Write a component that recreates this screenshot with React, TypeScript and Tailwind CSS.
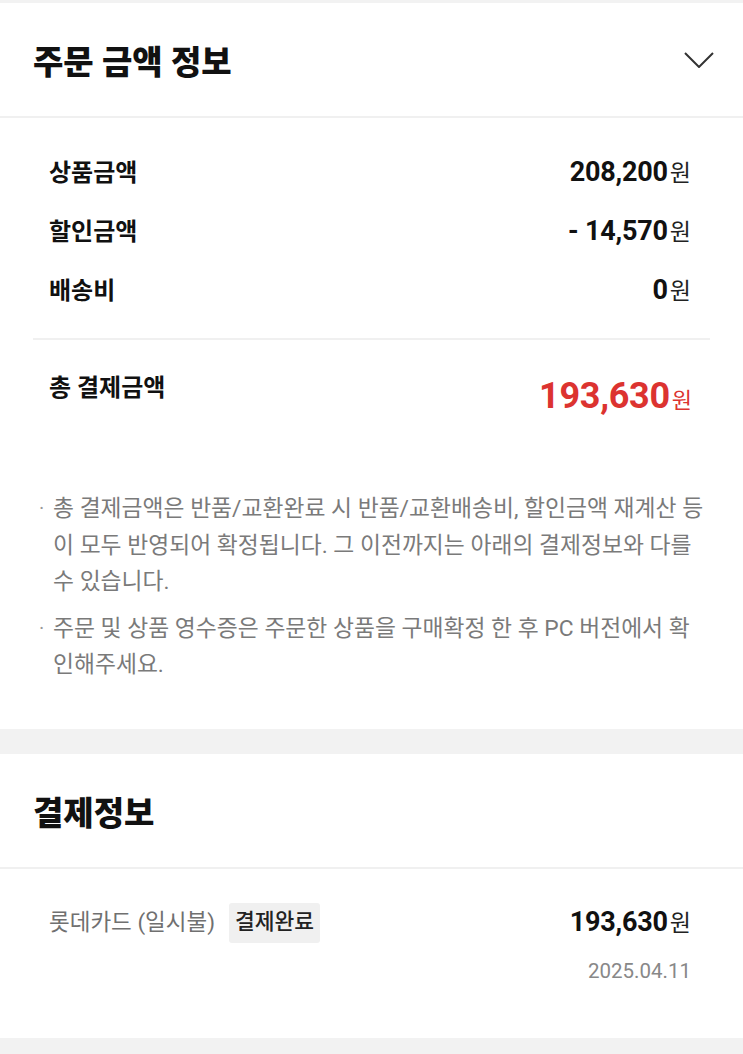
import React from "react";

const font = "font-['Roboto','Noto_Sans_CJK_KR',sans-serif]";

const Won = ({ className = "" }: { className?: string }) => (
  <span className={`ml-[2px] font-normal ${className}`}>원</span>
);

const AmountRow = ({ label, value }: { label: string; value: string }) => (
  <div className="flex h-[59px] items-center justify-between">
    <span className="text-[24px] font-bold text-[#111]">{label}</span>
    <span className="flex items-baseline">
      <span className="text-[27px] font-bold tracking-[-0.2px] text-[#111]">{value}</span>
      <Won className="text-[23px] text-[#222]" />
    </span>
  </div>
);

const Note = ({ lines }: { lines: string[] }) => (
  <div className="flex">
    <span className="w-[15px] shrink-0 pl-[1px] text-[20px] leading-[34px] text-[#999]">·</span>
    <div>
      {lines.map((line, i) => (
        <div key={i} className="whitespace-nowrap text-[22.8px] leading-[36.5px] text-[#7a7a7a]">
          {line}
        </div>
      ))}
    </div>
  </div>
);

export default function App() {
  return (
    <div className={`min-h-screen bg-[#f2f2f2] ${font}`}>
      <div className="h-[3px]" />

      {/* 주문 금액 정보 */}
      <section className="bg-white">
        <div className="flex h-[113px] items-center justify-between pl-[33px] pr-[29px]">
          <h2 className="mt-[7px] text-[33px] font-black text-[#111]">주문 금액 정보</h2>
          <svg width="30" height="16" viewBox="0 0 30 16" fill="none" className="mt-[1px]">
            <polyline points="1,1 15,15 29,1" stroke="#333" strokeWidth="2" />
          </svg>
        </div>
        <div className="h-[2px] bg-[#f0f0f0]" />

        <div className="pl-[49px] pr-[52px] pt-[25px]">
          <AmountRow label="상품금액" value="208,200" />
          <AmountRow label="할인금액" value="- 14,570" />
          <AmountRow label="배송비" value="0" />
        </div>

        <div className="mx-[33px] mt-[18px] h-[2px] bg-[#f0f0f0]" />

        <div className="flex items-start justify-between pl-[49px] pr-[51px] pt-[33px]">
          <span className="text-[24px] font-bold leading-[30px] text-[#111]">총 결제금액</span>
          <span className="mt-[1px] flex items-baseline leading-[44px] text-[#dc3330]">
            <span className="text-[36px] font-bold tracking-[-0.3px]">193,630</span>
            <Won className="text-[22px]" />
          </span>
        </div>

        <div className="flex flex-col gap-[10px] pb-[45px] pl-[38px] pr-[20px] pt-[68px]">
          <Note
            lines={[
              "총 결제금액은 반품/교환완료 시 반품/교환배송비, 할인금액 재계산 등",
              "이 모두 반영되어 확정됩니다. 그 이전까지는 아래의 결제정보와 다를",
              "수 있습니다.",
            ]}
          />
          <Note
            lines={[
              "주문 및 상품 영수증은 주문한 상품을 구매확정 한 후 PC 버전에서 확",
              "인해주세요.",
            ]}
          />
        </div>
      </section>

      <div className="h-[25px]" />

      {/* 결제정보 */}
      <section className="bg-white">
        <div className="flex h-[113px] items-center pl-[33px]">
          <h2 className="mt-[7px] text-[33px] font-black text-[#111]">결제정보</h2>
        </div>
        <div className="h-[2px] bg-[#f0f0f0]" />

        <div className="pb-[55px] pl-[49px] pr-[52px] pt-[34px]">
          <div className="flex h-[40px] items-center justify-between">
            <div className="flex items-center gap-[14px]">
              <span className="text-[22.5px] text-[#707070]">롯데카드 (일시불)</span>
              <span className="flex h-[40px] items-center rounded-[3px] bg-[#f0f0f0] px-[6px] text-[21.5px] font-medium text-[#222]">
                결제완료
              </span>
            </div>
            <span className="flex items-baseline">
              <span className="text-[27px] font-bold tracking-[-0.2px] text-[#111]">193,630</span>
              <Won className="text-[23px] text-[#222]" />
            </span>
          </div>
          <div className="mt-[16px] text-right text-[20.5px] leading-[24px] text-[#888]">2025.04.11</div>
        </div>
      </section>
    </div>
  );
}
